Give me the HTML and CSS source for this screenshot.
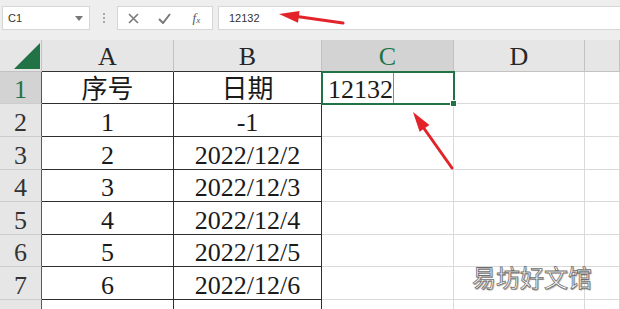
FILE: index.html
```html
<!DOCTYPE html>
<html lang="zh-CN">
<head>
    <meta charset="UTF-8">
    <title>Sheet</title>
    <link rel="stylesheet" href="styles.css">
</head>
<body>
    <div class="toolbar">
        <div class="name-box">
            <span>C1</span>
            <svg class="drop" width="8" height="5" viewBox="0 0 8 5"><path d="M0 0 L8 0 L4 5 Z" fill="#777"/></svg>
        </div>
        <div class="grip"><i></i><i></i><i></i></div>
        <div class="buttons">
            <span class="btn">
                <svg width="11" height="11" viewBox="0 0 11 11"><path d="M1 1 L10 10 M10 1 L1 10" stroke="#7a7a7a" stroke-width="1.6" fill="none"/></svg>
            </span>
            <span class="btn">
                <svg width="13" height="11" viewBox="0 0 13 11"><path d="M1 6 L5 10 L12 1" stroke="#7a7a7a" stroke-width="2" fill="none"/></svg>
            </span>
            <span class="btn fx">f<small>x</small></span>
        </div>
        <div class="formula">12132</div>
    </div>

    <div class="sheet">
        <div class="corner">
            <svg width="26" height="26" viewBox="0 0 26 26"><path d="M26 0 L26 26 L0 26 Z" fill="#217346"/></svg>
        </div>
        <div class="col-head tb">A</div>
        <div class="col-head tb">B</div>
        <div class="col-head sel">C</div>
        <div class="col-head">D</div>
        <div class="col-head"></div>

        <div class="row-head sel">1</div>
        <div class="cell t">序号</div>
        <div class="cell t">日期</div>
        <div class="cell active"><span class="edit">12132</span><span class="caret"></span></div>
        <div class="cell"></div>
        <div class="cell"></div>

        <div class="row-head">2</div>
        <div class="cell t">1</div>
        <div class="cell t">-1</div>
        <div class="cell"></div>
        <div class="cell"></div>
        <div class="cell"></div>

        <div class="row-head">3</div>
        <div class="cell t">2</div>
        <div class="cell t">2022/12/2</div>
        <div class="cell"></div>
        <div class="cell"></div>
        <div class="cell"></div>

        <div class="row-head">4</div>
        <div class="cell t">3</div>
        <div class="cell t">2022/12/3</div>
        <div class="cell"></div>
        <div class="cell"></div>
        <div class="cell"></div>

        <div class="row-head">5</div>
        <div class="cell t">4</div>
        <div class="cell t">2022/12/4</div>
        <div class="cell"></div>
        <div class="cell"></div>
        <div class="cell"></div>

        <div class="row-head">6</div>
        <div class="cell t">5</div>
        <div class="cell t">2022/12/5</div>
        <div class="cell"></div>
        <div class="cell"></div>
        <div class="cell"></div>

        <div class="row-head">7</div>
        <div class="cell t">6</div>
        <div class="cell t">2022/12/6</div>
        <div class="cell"></div>
        <div class="cell"></div>
        <div class="cell"></div>

        <div class="row-head"></div>
        <div class="cell t"></div>
        <div class="cell t"></div>
        <div class="cell"></div>
        <div class="cell"></div>
        <div class="cell"></div>
    </div>

    <!-- annotation arrows drawn over the sheet -->
    <svg class="arrows" width="620" height="309" viewBox="0 0 620 309">
        <path d="M343 23 L297 16.5" stroke="#e3232a" stroke-width="3" stroke-linecap="round"/>
        <path d="M279 14 L298 22.7 L299.6 10.9 Z" fill="#e3232a"/>
        <path d="M452 168 L423 127" stroke="#e3232a" stroke-width="3" stroke-linecap="round"/>
        <path d="M413 112 L419.6 131.8 L429.4 125 Z" fill="#e3232a"/>
    </svg>

    <div class="watermark">易坊好文馆</div>
</body>
</html>
```

FILE: styles.css
```css
/* Spreadsheet screenshot */
body {
    margin: 0;
    width: 620px;
    height: 309px;
    overflow: hidden;
    position: relative;
    background-color: #fff;
    font-family: "Liberation Serif", "Noto Sans CJK SC", serif;
}
.toolbar {
    height: 40px;
    box-sizing: border-box;
    display: flex;
    align-items: flex-start;
    padding: 6px 0 0 2px;
    background-color: #eeeeee;
    font-family: "Liberation Sans", Arial, sans-serif;
    font-size: 11px;
    color: #333;
}
.name-box {
    width: 88px;
    height: 24px;
    box-sizing: border-box;
    display: flex;
    align-items: center;
    justify-content: space-between;
    padding: 0 6px 0 5px;
    background-color: #fff;
    border: 1px solid #d6d6d6;
}
.grip {
    width: 27px;
    height: 24px;
    display: flex;
    flex-direction: column;
    align-items: center;
    justify-content: center;
    gap: 2px;
}
.grip i {
    width: 2px;
    height: 2px;
    background-color: #a8a8a8;
}
.buttons {
    width: 96px;
    height: 24px;
    box-sizing: border-box;
    display: flex;
    background-color: #fff;
    border: 1px solid #d6d6d6;
}
.btn {
    width: 32px;
    display: flex;
    align-items: center;
    justify-content: center;
}
.fx {
    font-family: "Liberation Serif", serif;
    font-style: italic;
    font-size: 13px;
    color: #555;
}
.fx small {
    font-size: 9px;
    margin-top: 3px;
}
.formula {
    flex: 1;
    height: 24px;
    box-sizing: border-box;
    margin-left: 5px;
    padding-left: 10px;
    line-height: 22px;
    background-color: #fff;
    border: 1px solid #d6d6d6;
    border-right: none;
}
.sheet {
    display: grid;
    grid-template-columns: 42px 132px 148px 132px 131px 1fr;
    grid-template-rows: 32px 32px 33px 33px 32px 33px 32px 33px 33px;
    font-family: "Liberation Serif", "Noto Sans CJK SC", serif;
    font-size: 26px;
    line-height: 26px;
    color: #1a1a1a;
}
.sheet > div {
    box-sizing: border-box;
    display: flex;
    align-items: center;
    justify-content: center;
    border-right: 1px solid #dadada;
    border-bottom: 1px solid #dadada;
    padding-top: 5px;
}
.sheet > .corner {
    background-color: #e6e6e6;
    border-right-color: #c2c2c2;
    border-bottom-color: #c2c2c2;
    align-items: flex-end;
    justify-content: flex-end;
    padding: 0 1px 2px 0;
}
.sheet > .col-head {
    background-color: #e6e6e6;
    border-right-color: #c2c2c2;
    border-bottom-color: #c2c2c2;
    color: #262626;
    padding-top: 2px;
}
.sheet > .col-head.tb {
    border-bottom-color: #333;
}
.sheet > .col-head.sel {
    background-color: #d3d3d3;
    color: #217346;
    border-bottom-color: #217346;
}
.sheet > .row-head {
    background-color: #e6e6e6;
    border-right-color: #5a5a5a;
    border-bottom-color: #cdcdcd;
    color: #333;
}
.sheet > .row-head.sel {
    background-color: #d3d3d3;
    color: #217346;
    border-right-color: #217346;
}
.sheet > .t {
    border-right-color: #2e2e2e;
    border-bottom-color: #2e2e2e;
}
.sheet > .active {
    position: relative;
    justify-content: flex-start;
    padding: 5px 0 0 6px;
    outline: 2px solid #217346;
    outline-offset: -1px;
}
.active::after {
    content: "";
    position: absolute;
    right: -4px;
    bottom: -4px;
    width: 5px;
    height: 5px;
    background-color: #217346;
    border: 1px solid #fff;
}
.caret {
    align-self: stretch;
    width: 1px;
    margin-top: -5px;
    background-color: #8a8a8a;
}
.arrows {
    position: absolute;
    left: 0;
    top: 0;
    pointer-events: none;
}
.watermark {
    position: absolute;
    left: 472px;
    top: 259px;
    font-family: "Noto Sans CJK SC", sans-serif;
    font-size: 24px;
    color: #fff;
    -webkit-text-stroke: 0.8px #6e6e6e;
    text-shadow: 1px 1px 1px rgba(0, 0, 0, 0.35);
}
```
